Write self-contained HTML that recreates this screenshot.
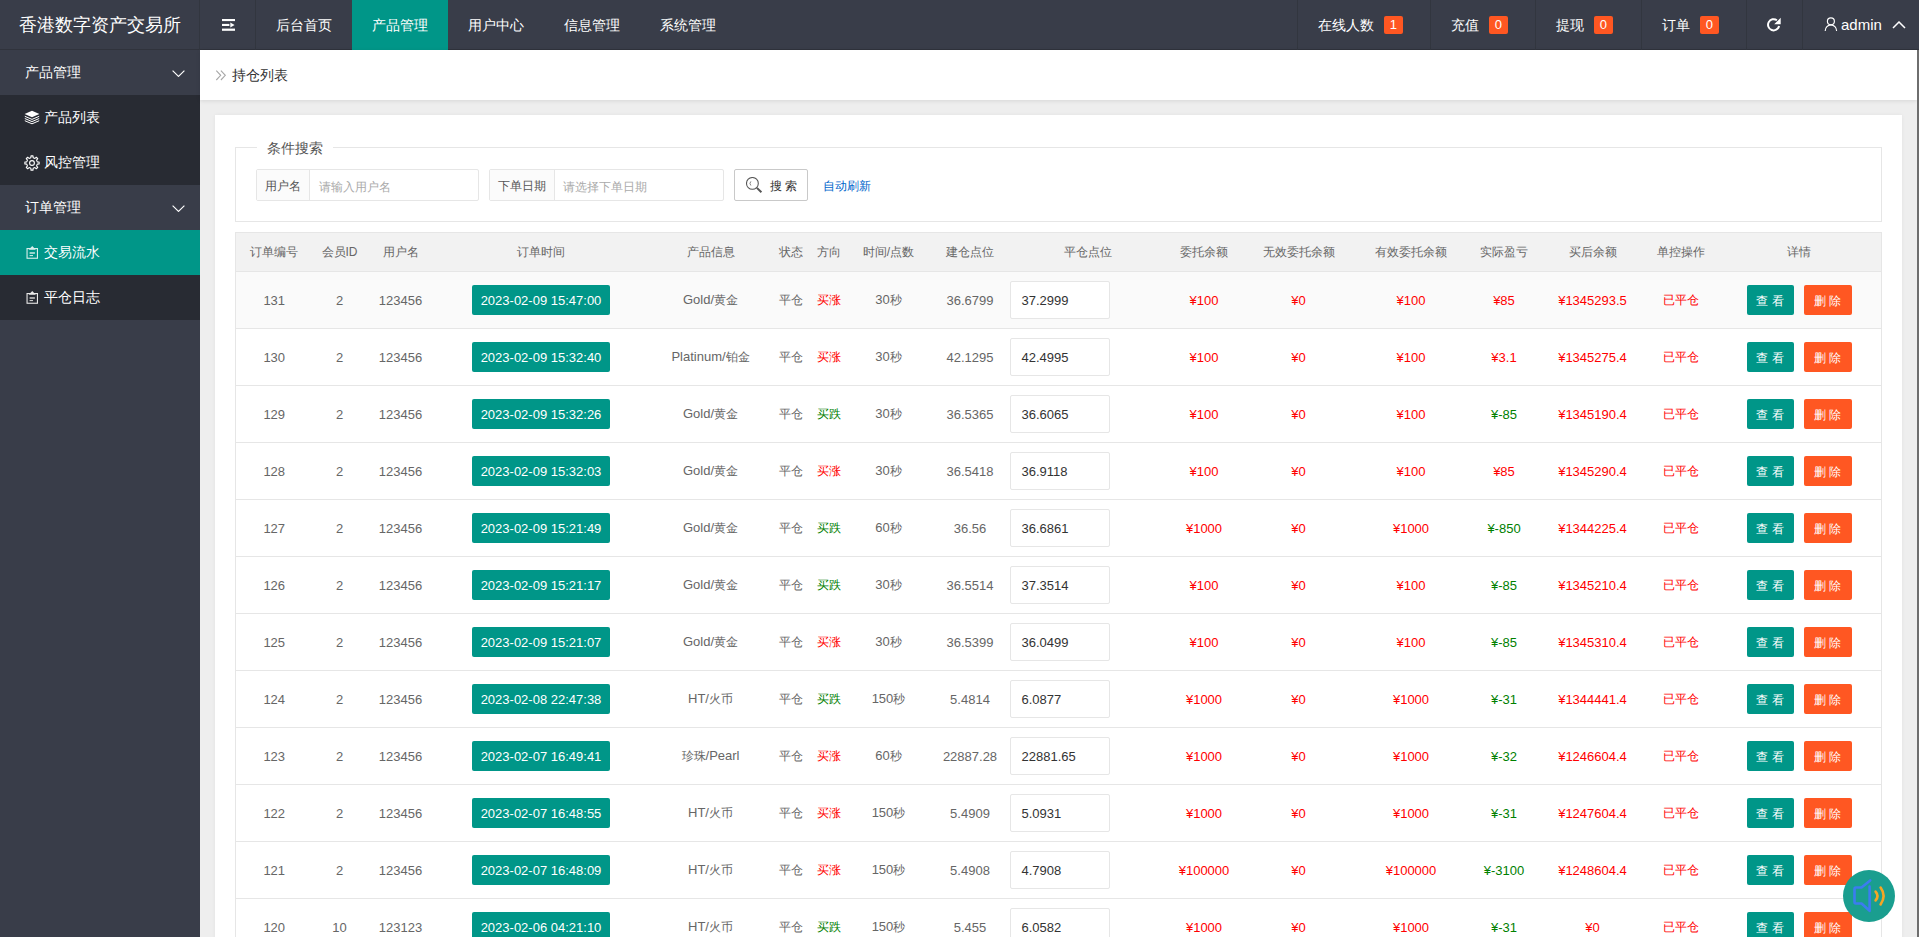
<!DOCTYPE html>
<html><head><meta charset="utf-8">
<style>
*{margin:0;padding:0;box-sizing:border-box}
html,body{width:1919px;height:937px;overflow:hidden}
body{font-family:"Liberation Sans",sans-serif;background:#eeeeee;position:relative;color:#666}
.hdr{position:absolute;left:0;top:0;width:1919px;height:50px;background:#393D49}
.logo{position:absolute;left:0;top:0;width:200px;height:50px;color:#fff;font-size:18px;line-height:50px;text-align:center}
.vl{position:absolute;top:0;width:1px;height:50px;background:#32363f}
.nav{position:absolute;top:0;height:50px;line-height:50px;color:#fff;font-size:14px;text-align:center}
.nav.act{background:#009688}
.bdg{display:inline-block;background:#FF5722;color:#fff;font-size:13px;height:18px;line-height:18px;width:19px;text-align:center;border-radius:2px;vertical-align:middle;position:relative;top:-1px}
.side{position:absolute;left:0;top:50px;width:200px;height:887px;background:#393D49}
.sitem{position:absolute;left:0;width:200px;height:45px;line-height:45px;color:#fff;font-size:14px;padding-left:25px}
.sub{background:#282B33}
.sact{background:#009688}
.chev{position:absolute;left:172px;top:20px;width:13px;height:7px}
.crumb{position:absolute;left:200px;top:50px;width:1717px;height:50px;background:#fff;box-shadow:0 1px 4px rgba(0,0,0,.1)}
.crumb .t{position:absolute;left:32px;top:0;line-height:50px;font-size:14px;color:#333}
.card{position:absolute;left:215px;top:115px;width:1687px;height:900px;background:#fff;box-shadow:0 0 4px rgba(0,0,0,.05)}
.fs{position:absolute;left:20px;top:32px;width:1647px;height:75px;border:1px solid #e6e6e6}
.lg{position:absolute;left:21px;top:-10px;padding:0 10px;background:#fff;font-size:14px;line-height:20px;color:#555}
.ig{position:absolute;top:21px;height:32px;border:1px solid #e6e6e6;border-radius:2px;background:#fff}
.ig .lb{position:absolute;left:0;top:0;height:30px;line-height:32px;background:#fbfbfb;border-right:1px solid #e6e6e6;font-size:12px;color:#555;text-align:center}
.ig .ph{position:absolute;top:1px;line-height:32px;font-size:12px;color:#aaa}
.sbtn{position:absolute;top:21px;left:498px;width:74px;height:32px;border:1px solid #C9C9C9;border-radius:2px;background:#fff}
.auto{position:absolute;left:587px;top:22px;line-height:32px;font-size:12px;color:#0066CC}
table{position:absolute;left:20px;top:117px;border-collapse:collapse;table-layout:fixed;font-size:12px;color:#666;width:1646px}
th{height:39px;background:#f2f2f2;font-weight:normal;text-align:center;border-top:1px solid #e6e6e6;border-bottom:1px solid #e6e6e6;color:#666;padding:0}
td{height:57px;text-align:center;border-bottom:1px solid #e6e6e6;padding:0;background:#fff}
table{border-left:1px solid #e6e6e6;border-right:1px solid #e6e6e6}
tr.hov td{background:#fafafa}
b.n{font-weight:normal;font-size:13px}
.red{color:#FF0000}
.grn{color:#008000}
.tm{display:inline-block;background:#009688;color:#fff;height:30px;line-height:32px;width:138px;border-radius:2px;font-size:13px}
.pc{position:relative;text-align:left}
.inp{position:absolute;left:-2px;top:9px;width:100px;height:38px;border:1px solid #e6e6e6;border-radius:2px;background:#fff;color:#333;font-size:12px;line-height:38px;padding-left:11px}
.ops{position:relative}
.bt{position:absolute;top:13px;height:30px;line-height:32px;color:#fff;font-size:12px;border-radius:2px;text-align:center}
.bt1{left:30px;width:47px;background:#009688}
.bt2{left:87px;width:48px;background:#FF5722}
.scr{position:absolute;left:1917px;top:50px;width:2px;height:887px;background:#6e6e6e}
.snd{position:absolute;left:1843px;top:870px;width:52px;height:52px;border-radius:50%;background:#1A9E8F}
</style></head><body>
<div class="hdr">
  <div style="position:absolute;left:0;top:49px;width:1919px;height:1px;background:#30333c"></div>
  <div class="logo">香港数字资产交易所</div>
  <div class="vl" style="left:199px"></div>
  <div class="nav" style="left:201px;width:54px">
    <svg width="14" height="12" viewBox="0 0 14 12" style="position:absolute;left:21px;top:19px"><rect x="0" y="0" width="13" height="2.1" fill="#fff"/><rect x="0" y="4.9" width="7.4" height="2.1" fill="#fff"/><path d="M8.3 3.6 L12.6 6 L8.3 8.4Z" fill="#fff"/><rect x="0" y="9.6" width="13" height="2.2" fill="#fff"/></svg>
  </div>
  <div class="vl" style="left:255px"></div>
  <div class="nav" style="left:256px;width:96px">后台首页</div>
  <div class="nav act" style="left:352px;width:96px">产品管理</div>
  <div class="nav" style="left:448px;width:96px">用户中心</div>
  <div class="nav" style="left:544px;width:96px">信息管理</div>
  <div class="nav" style="left:640px;width:96px">系统管理</div>
  <div class="vl" style="left:1297px"></div>
  <div class="nav" style="left:1298px;width:132px;text-align:left;padding-left:20px">在线人数 <span class="bdg" style="margin-left:6px">1</span></div>
  <div class="vl" style="left:1430px"></div>
  <div class="nav" style="left:1431px;width:105px;text-align:left;padding-left:20px">充值 <span class="bdg" style="margin-left:6px">0</span></div>
  <div class="vl" style="left:1535px"></div>
  <div class="nav" style="left:1536px;width:105px;text-align:left;padding-left:20px">提现 <span class="bdg" style="margin-left:6px">0</span></div>
  <div class="vl" style="left:1641px"></div>
  <div class="nav" style="left:1642px;width:104px;text-align:left;padding-left:20px">订单 <span class="bdg" style="margin-left:6px">0</span></div>
  <div class="vl" style="left:1746px"></div>
  <div class="nav" style="left:1747px;width:55px">
    <svg width="30" height="26" viewBox="0 0 30 26" style="position:absolute;left:13px;top:12px"><path d="M16.9 8.2 A5.6 5.6 0 1 0 19.1 14.1" fill="none" stroke="#fff" stroke-width="2"/><path d="M14.2 12.2 L20.7 12.2 L20.7 5.8Z" fill="#fff"/></svg>
  </div>
  <div class="vl" style="left:1802px"></div>
  <div class="nav" style="left:1803px;width:116px;text-align:left">
    <svg width="14" height="15" viewBox="0 0 14 15" style="position:absolute;left:21px;top:17px"><circle cx="6.9" cy="4.3" r="3.5" fill="none" stroke="#fff" stroke-width="1.15"/><path d="M1.2 14 A5.7 6.2 0 0 1 12.6 14" fill="none" stroke="#fff" stroke-width="1.15"/></svg>
    <span style="position:absolute;left:38px;top:0;font-size:15px">admin</span>
    <svg width="14" height="8" viewBox="0 0 14 8" style="position:absolute;left:89px;top:21px"><path d="M1 7 L7 1 L13 7" fill="none" stroke="#fff" stroke-width="1.5"/></svg>
  </div>
</div>
<div class="side">
  <div class="sitem" style="top:0">产品管理<svg class="chev" viewBox="0 0 13 7"><path d="M0.6 0.6 L6.5 6.4 L12.4 0.6" fill="none" stroke="#fff" stroke-width="1.15"/></svg></div>
  <div class="sitem sub" style="top:45px;height:90px"></div>
  <div class="sitem" style="top:45px;padding-left:44px">产品列表</div>
  <div class="sitem" style="top:90px;padding-left:44px">风控管理</div>
  <div class="sitem" style="top:135px">订单管理<svg class="chev" viewBox="0 0 13 7"><path d="M0.6 0.6 L6.5 6.4 L12.4 0.6" fill="none" stroke="#fff" stroke-width="1.15"/></svg></div>
  <div class="sitem sact" style="top:180px;padding-left:44px">交易流水</div>
  <div class="sitem sub" style="top:225px;padding-left:44px">平仓日志</div>
  <svg width="16" height="15" viewBox="0 0 16 15" style="position:absolute;left:24px;top:60px"><path d="M8 0.8 L15.4 4.1 L8 7.3 L0.6 4.1Z" fill="#fff"/><path d="M0.8 6.3 L8 9.4 L15.2 6.3 M0.8 8.5 L8 11.6 L15.2 8.5 M0.8 10.7 L8 13.8 L15.2 10.7" fill="none" stroke="#fff" stroke-width="1"/></svg>
  <svg width="16" height="16" viewBox="0 0 16 16" style="position:absolute;left:24px;top:105px"><path d="M13.27 6.84 L15.13 7.01 L15.13 8.99 L13.27 9.16 L12.55 10.91 L13.74 12.35 L12.35 13.74 L10.91 12.55 L9.16 13.27 L8.99 15.13 L7.01 15.13 L6.84 13.27 L5.09 12.55 L3.65 13.74 L2.26 12.35 L3.45 10.91 L2.73 9.16 L0.87 8.99 L0.87 7.01 L2.73 6.84 L3.45 5.09 L2.26 3.65 L3.65 2.26 L5.09 3.45 L6.84 2.73 L7.01 0.87 L8.99 0.87 L9.16 2.73 L10.91 3.45 L12.35 2.26 L13.74 3.65 L12.55 5.09Z" fill="none" stroke="#fff" stroke-width="1.1" stroke-linejoin="round"/><circle cx="8" cy="8" r="2.4" fill="none" stroke="#fff" stroke-width="1.1"/></svg>
  <svg width="13" height="14" viewBox="0 0 13 14" style="position:absolute;left:26px;top:196px"><rect x="1.05" y="2.55" width="10.4" height="9.7" fill="none" stroke="#d9efec" stroke-width="1.1"/><path d="M4 3.2 L6.25 0.9 L8.5 3.2Z" fill="none" stroke="#d9efec" stroke-width="1.1"/><path d="M3.6 7 L8.9 7" stroke="#cfe9e5" stroke-width="1.5"/><path d="M3.6 9.6 L7 9.6" stroke="#d9efec" stroke-width="1"/></svg>
  <svg width="13" height="14" viewBox="0 0 13 14" style="position:absolute;left:26px;top:241px"><rect x="1.05" y="2.55" width="10.4" height="9.7" fill="none" stroke="#e8e8e8" stroke-width="1.1"/><path d="M4 3.2 L6.25 0.9 L8.5 3.2Z" fill="none" stroke="#e8e8e8" stroke-width="1.1"/><path d="M3.6 7 L8.9 7" stroke="#ccc" stroke-width="1.5"/><path d="M3.6 9.6 L7 9.6" stroke="#ddd" stroke-width="1"/></svg>
</div>
<div class="crumb"><svg width="12" height="13" viewBox="0 0 12 13" style="position:absolute;left:15px;top:19px"><path d="M1.3 1.6 L5.7 6.3 L1.3 11 M5.9 1.6 L10.3 6.3 L5.9 11" fill="none" stroke="#a8a8a8" stroke-width="1.1"/></svg><span class="t">持仓列表</span></div>
<div class="card">
  <div class="fs">
    <div class="lg">条件搜索</div>
    <div class="ig" style="left:20px;width:223px"><div class="lb" style="width:53px">用户名</div><div class="ph" style="left:62px">请输入用户名</div></div>
    <div class="ig" style="left:253px;width:235px"><div class="lb" style="width:65px">下单日期</div><div class="ph" style="left:73px">请选择下单日期</div></div>
    <div class="sbtn"><svg width="18" height="18" viewBox="0 0 18 18" style="position:absolute;left:11px;top:7px"><circle cx="6.4" cy="6.4" r="5.9" fill="none" stroke="#555" stroke-width="1.05"/><path d="M4.9 4.4 A3 3 0 0 0 4.9 8.5" fill="none" stroke="#777" stroke-width="0.9"/><path d="M10.9 10.9 L15.4 15.3" stroke="#555" stroke-width="2"/></svg><span style="position:absolute;left:35px;top:0;line-height:32px;font-size:12px;color:#333">搜 索</span></div>
    <div class="auto">自动刷新</div>
  </div>
  <table>
  <colgroup><col style="width:77px"><col style="width:54px"><col style="width:68px"><col style="width:213px"><col style="width:126px"><col style="width:35px"><col style="width:40px"><col style="width:80px"><col style="width:83px"><col style="width:153px"><col style="width:79px"><col style="width:110px"><col style="width:115px"><col style="width:71px"><col style="width:106px"><col style="width:71px"><col style="width:165px"></colgroup>
  <thead><tr><th>订单编号</th><th>会员ID</th><th>用户名</th><th>订单时间</th><th>产品信息</th><th>状态</th><th>方向</th><th>时间/点数</th><th>建仓点位</th><th>平仓点位</th><th>委托余额</th><th>无效委托余额</th><th>有效委托余额</th><th>实际盈亏</th><th>买后余额</th><th>单控操作</th><th>详情</th></tr></thead>
  <tbody>
<tr class="hov"><td><b class="n">131</b></td><td><b class="n">2</b></td><td><b class="n">123456</b></td><td><span class="tm"><b class="n">2023-02-09 15:47:00</b></span></td><td><b class="n">Gold/</b>黄金</td><td>平仓</td><td><span class="red">买涨</span></td><td><b class="n">30</b>秒</td><td><b class="n">36.6799</b></td><td class="pc"><div class="inp"><b class="n">37.2999</b></div></td><td class="red"><b class="n">¥100</b></td><td class="red"><b class="n">¥0</b></td><td class="red"><b class="n">¥100</b></td><td class="red"><b class="n">¥85</b></td><td class="red"><b class="n">¥1345293.5</b></td><td class="red">已平仓</td><td class="ops"><span class="bt bt1">查 看</span><span class="bt bt2">删 除</span></td></tr>
<tr><td><b class="n">130</b></td><td><b class="n">2</b></td><td><b class="n">123456</b></td><td><span class="tm"><b class="n">2023-02-09 15:32:40</b></span></td><td><b class="n">Platinum/</b>铂金</td><td>平仓</td><td><span class="red">买涨</span></td><td><b class="n">30</b>秒</td><td><b class="n">42.1295</b></td><td class="pc"><div class="inp"><b class="n">42.4995</b></div></td><td class="red"><b class="n">¥100</b></td><td class="red"><b class="n">¥0</b></td><td class="red"><b class="n">¥100</b></td><td class="red"><b class="n">¥3.1</b></td><td class="red"><b class="n">¥1345275.4</b></td><td class="red">已平仓</td><td class="ops"><span class="bt bt1">查 看</span><span class="bt bt2">删 除</span></td></tr>
<tr><td><b class="n">129</b></td><td><b class="n">2</b></td><td><b class="n">123456</b></td><td><span class="tm"><b class="n">2023-02-09 15:32:26</b></span></td><td><b class="n">Gold/</b>黄金</td><td>平仓</td><td><span class="grn">买跌</span></td><td><b class="n">30</b>秒</td><td><b class="n">36.5365</b></td><td class="pc"><div class="inp"><b class="n">36.6065</b></div></td><td class="red"><b class="n">¥100</b></td><td class="red"><b class="n">¥0</b></td><td class="red"><b class="n">¥100</b></td><td class="grn"><b class="n">¥-85</b></td><td class="red"><b class="n">¥1345190.4</b></td><td class="red">已平仓</td><td class="ops"><span class="bt bt1">查 看</span><span class="bt bt2">删 除</span></td></tr>
<tr><td><b class="n">128</b></td><td><b class="n">2</b></td><td><b class="n">123456</b></td><td><span class="tm"><b class="n">2023-02-09 15:32:03</b></span></td><td><b class="n">Gold/</b>黄金</td><td>平仓</td><td><span class="red">买涨</span></td><td><b class="n">30</b>秒</td><td><b class="n">36.5418</b></td><td class="pc"><div class="inp"><b class="n">36.9118</b></div></td><td class="red"><b class="n">¥100</b></td><td class="red"><b class="n">¥0</b></td><td class="red"><b class="n">¥100</b></td><td class="red"><b class="n">¥85</b></td><td class="red"><b class="n">¥1345290.4</b></td><td class="red">已平仓</td><td class="ops"><span class="bt bt1">查 看</span><span class="bt bt2">删 除</span></td></tr>
<tr><td><b class="n">127</b></td><td><b class="n">2</b></td><td><b class="n">123456</b></td><td><span class="tm"><b class="n">2023-02-09 15:21:49</b></span></td><td><b class="n">Gold/</b>黄金</td><td>平仓</td><td><span class="grn">买跌</span></td><td><b class="n">60</b>秒</td><td><b class="n">36.56</b></td><td class="pc"><div class="inp"><b class="n">36.6861</b></div></td><td class="red"><b class="n">¥1000</b></td><td class="red"><b class="n">¥0</b></td><td class="red"><b class="n">¥1000</b></td><td class="grn"><b class="n">¥-850</b></td><td class="red"><b class="n">¥1344225.4</b></td><td class="red">已平仓</td><td class="ops"><span class="bt bt1">查 看</span><span class="bt bt2">删 除</span></td></tr>
<tr><td><b class="n">126</b></td><td><b class="n">2</b></td><td><b class="n">123456</b></td><td><span class="tm"><b class="n">2023-02-09 15:21:17</b></span></td><td><b class="n">Gold/</b>黄金</td><td>平仓</td><td><span class="grn">买跌</span></td><td><b class="n">30</b>秒</td><td><b class="n">36.5514</b></td><td class="pc"><div class="inp"><b class="n">37.3514</b></div></td><td class="red"><b class="n">¥100</b></td><td class="red"><b class="n">¥0</b></td><td class="red"><b class="n">¥100</b></td><td class="grn"><b class="n">¥-85</b></td><td class="red"><b class="n">¥1345210.4</b></td><td class="red">已平仓</td><td class="ops"><span class="bt bt1">查 看</span><span class="bt bt2">删 除</span></td></tr>
<tr><td><b class="n">125</b></td><td><b class="n">2</b></td><td><b class="n">123456</b></td><td><span class="tm"><b class="n">2023-02-09 15:21:07</b></span></td><td><b class="n">Gold/</b>黄金</td><td>平仓</td><td><span class="red">买涨</span></td><td><b class="n">30</b>秒</td><td><b class="n">36.5399</b></td><td class="pc"><div class="inp"><b class="n">36.0499</b></div></td><td class="red"><b class="n">¥100</b></td><td class="red"><b class="n">¥0</b></td><td class="red"><b class="n">¥100</b></td><td class="grn"><b class="n">¥-85</b></td><td class="red"><b class="n">¥1345310.4</b></td><td class="red">已平仓</td><td class="ops"><span class="bt bt1">查 看</span><span class="bt bt2">删 除</span></td></tr>
<tr><td><b class="n">124</b></td><td><b class="n">2</b></td><td><b class="n">123456</b></td><td><span class="tm"><b class="n">2023-02-08 22:47:38</b></span></td><td><b class="n">HT/</b>火币</td><td>平仓</td><td><span class="grn">买跌</span></td><td><b class="n">150</b>秒</td><td><b class="n">5.4814</b></td><td class="pc"><div class="inp"><b class="n">6.0877</b></div></td><td class="red"><b class="n">¥1000</b></td><td class="red"><b class="n">¥0</b></td><td class="red"><b class="n">¥1000</b></td><td class="grn"><b class="n">¥-31</b></td><td class="red"><b class="n">¥1344441.4</b></td><td class="red">已平仓</td><td class="ops"><span class="bt bt1">查 看</span><span class="bt bt2">删 除</span></td></tr>
<tr><td><b class="n">123</b></td><td><b class="n">2</b></td><td><b class="n">123456</b></td><td><span class="tm"><b class="n">2023-02-07 16:49:41</b></span></td><td>珍珠<b class="n">/Pearl</b></td><td>平仓</td><td><span class="red">买涨</span></td><td><b class="n">60</b>秒</td><td><b class="n">22887.28</b></td><td class="pc"><div class="inp"><b class="n">22881.65</b></div></td><td class="red"><b class="n">¥1000</b></td><td class="red"><b class="n">¥0</b></td><td class="red"><b class="n">¥1000</b></td><td class="grn"><b class="n">¥-32</b></td><td class="red"><b class="n">¥1246604.4</b></td><td class="red">已平仓</td><td class="ops"><span class="bt bt1">查 看</span><span class="bt bt2">删 除</span></td></tr>
<tr><td><b class="n">122</b></td><td><b class="n">2</b></td><td><b class="n">123456</b></td><td><span class="tm"><b class="n">2023-02-07 16:48:55</b></span></td><td><b class="n">HT/</b>火币</td><td>平仓</td><td><span class="red">买涨</span></td><td><b class="n">150</b>秒</td><td><b class="n">5.4909</b></td><td class="pc"><div class="inp"><b class="n">5.0931</b></div></td><td class="red"><b class="n">¥1000</b></td><td class="red"><b class="n">¥0</b></td><td class="red"><b class="n">¥1000</b></td><td class="grn"><b class="n">¥-31</b></td><td class="red"><b class="n">¥1247604.4</b></td><td class="red">已平仓</td><td class="ops"><span class="bt bt1">查 看</span><span class="bt bt2">删 除</span></td></tr>
<tr><td><b class="n">121</b></td><td><b class="n">2</b></td><td><b class="n">123456</b></td><td><span class="tm"><b class="n">2023-02-07 16:48:09</b></span></td><td><b class="n">HT/</b>火币</td><td>平仓</td><td><span class="red">买涨</span></td><td><b class="n">150</b>秒</td><td><b class="n">5.4908</b></td><td class="pc"><div class="inp"><b class="n">4.7908</b></div></td><td class="red"><b class="n">¥100000</b></td><td class="red"><b class="n">¥0</b></td><td class="red"><b class="n">¥100000</b></td><td class="grn"><b class="n">¥-3100</b></td><td class="red"><b class="n">¥1248604.4</b></td><td class="red">已平仓</td><td class="ops"><span class="bt bt1">查 看</span><span class="bt bt2">删 除</span></td></tr>
<tr><td><b class="n">120</b></td><td><b class="n">10</b></td><td><b class="n">123123</b></td><td><span class="tm"><b class="n">2023-02-06 04:21:10</b></span></td><td><b class="n">HT/</b>火币</td><td>平仓</td><td><span class="grn">买跌</span></td><td><b class="n">150</b>秒</td><td><b class="n">5.455</b></td><td class="pc"><div class="inp"><b class="n">6.0582</b></div></td><td class="red"><b class="n">¥1000</b></td><td class="red"><b class="n">¥0</b></td><td class="red"><b class="n">¥1000</b></td><td class="grn"><b class="n">¥-31</b></td><td class="red"><b class="n">¥0</b></td><td class="red">已平仓</td><td class="ops"><span class="bt bt1">查 看</span><span class="bt bt2">删 除</span></td></tr>  </tbody></table>
</div>
<div class="scr"></div>
<div class="snd"><svg width="52" height="52" viewBox="0 0 52 52"><path d="M27.2 10.4 L18.5 17.5 L12.8 17.5 Q11.5 17.5 11.5 19 L11.5 32 Q11.5 33.5 12.8 33.5 L18.5 33.5 L26.6 40.8 L26.6 16.6" fill="none" stroke="#3B7CF0" stroke-width="2.6" stroke-linecap="round" stroke-linejoin="round"/><path d="M32.6 21.6 Q36.4 26 32.6 30.4" fill="none" stroke="#F5A623" stroke-width="2.6" stroke-linecap="round"/><path d="M37.6 17.6 Q43.6 26 37.6 34.4" fill="none" stroke="#F5A623" stroke-width="2.6" stroke-linecap="round"/></svg></div>
</body></html>
